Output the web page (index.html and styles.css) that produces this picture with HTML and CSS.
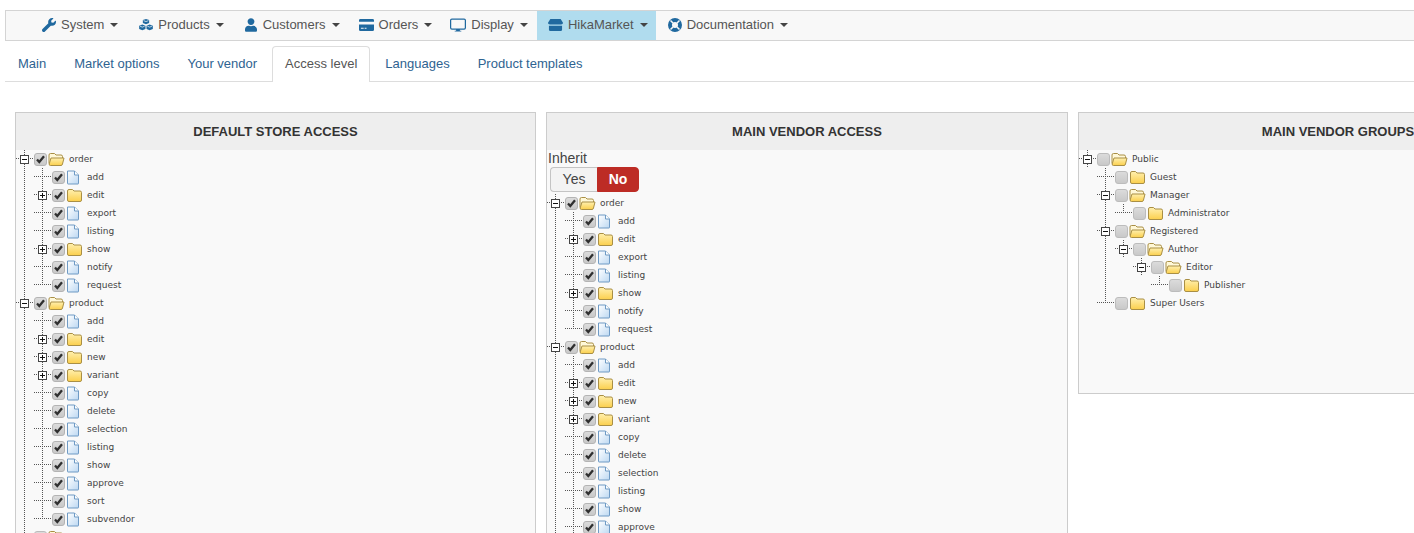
FILE: index.html
```html
<!DOCTYPE html>
<html lang="en">
<head>
<meta charset="utf-8">
<title>HikaMarket - Access level</title>
<link rel="stylesheet" href="styles.css">
</head>
<body>
<svg class="defs" width="0" height="0" aria-hidden="true">
  <defs>
    <linearGradient id="fy" x1="0" y1="0" x2="0" y2="1"><stop offset="0" stop-color="#fff0b0"/><stop offset="1" stop-color="#fbcf4c"/></linearGradient>
    <linearGradient id="fb" x1="0" y1="0" x2="1" y2="1"><stop offset="0" stop-color="#ffffff"/><stop offset="1" stop-color="#bcd8f2"/></linearGradient>
    <linearGradient id="cg" x1="0" y1="0" x2="0" y2="1"><stop offset="0" stop-color="#dcdcdc"/><stop offset="1" stop-color="#c8c8c8"/></linearGradient>
    <symbol id="check" viewBox="0 0 13 13">
      <rect x=".5" y=".5" width="12" height="12" rx="2.500" fill="url(#cg)" stroke="#b4b4b4"/>
      <path d="M3 6.500l2.300 2.500L10 3.200" fill="none" stroke="#2f2f2f" stroke-width="2.300"/>
    </symbol>
    <symbol id="uncheck" viewBox="0 0 13 13">
      <rect x=".5" y=".5" width="12" height="12" rx="2.500" fill="url(#cg)" stroke="#bcbcbc"/>
    </symbol>
    <symbol id="fopen" viewBox="0 0 17 14">
      <path d="M1 11.500V3Q1 1.500 2.500 1.500H6.500L8 3H13Q14.500 3 14.500 4.500V6" fill="#fff8d8" stroke="#a98f45"/>
      <path d="M1.200 12L3 6H16L14.500 12Q14.200 13.500 13 13.500H2.500Q1 13.500 1.200 12z" fill="url(#fy)" stroke="#a98f45"/>
    </symbol>
    <symbol id="fclosed" viewBox="0 0 17 14">
      <path d="M1.500 12V3Q1.500 1.500 3 1.500H6.500L8 3H14Q15.500 3 15.500 4.500V12Q15.500 13.500 14 13.500H3Q1.500 13.500 1.500 12z" fill="url(#fy)" stroke="#a98f45"/>
    </symbol>
    <symbol id="file" viewBox="0 0 14 15">
      <path d="M1.500 1H8.500L12.500 5V13.500Q12.500 14 12 14H2Q1.500 14 1.500 13.500z" fill="url(#fb)" stroke="#6f9ac4"/>
      <path d="M8.500 1V5H12.500" fill="#fff" stroke="#6f9ac4"/>
    </symbol>
    <symbol id="minus" viewBox="0 0 9 9">
      <rect x=".5" y=".5" width="8" height="8" fill="#fff" stroke="#444"/>
      <path d="M2 4.500H7" stroke="#111"/>
    </symbol>
    <symbol id="plus" viewBox="0 0 9 9">
      <rect x=".5" y=".5" width="8" height="8" fill="#fff" stroke="#444"/>
      <path d="M2 4.500H7M4.500 2V7" stroke="#111"/>
    </symbol>
  </defs>
</svg>

<nav class="menu">
  <a class="menu-item" href="#"><svg class="mi" viewBox="0 0 512 512"><path d="M507.73 109.1c-2.24-9.03-13.54-12.09-20.12-5.51l-74.36 74.36-67.88-11.31-11.31-67.88 74.36-74.36c6.62-6.62 3.43-17.9-5.66-20.16-47.38-11.74-99.55.91-136.58 37.93-39.64 39.64-50.55 97.1-34.05 147.2L18.74 402.76c-24.99 24.99-24.99 65.51 0 90.5 24.99 24.99 65.51 24.99 90.5 0l213.21-213.21c50.12 16.71 107.47 5.68 147.37-34.22 37.07-37.07 49.7-89.32 37.91-136.73z"/></svg><span>System</span><i class="caret"></i></a>
  <a class="menu-item" href="#"><svg class="mi" viewBox="0 0 16 14"><path d="M8 0l3.600 1.400v3.300L8 6.100 4.400 4.700V1.400zM3.800 6.500l3.600 1.400v3.700L3.800 13 .2 11.600V7.900zM12.200 6.500l3.600 1.400v3.700L12.200 13l-3.600-1.400V7.900z"/><path d="M5.200 2l2.800 1.100L10.800 2M1.200 8.400l2.600 1 2.600-1M9.600 8.400l2.600 1 2.600-1" fill="none" stroke="#fff" stroke-width=".8"/></svg><span>Products</span><i class="caret"></i></a>
  <a class="menu-item" href="#"><svg class="mi mi-user" viewBox="0 0 448 512"><path d="M224 256c70.700 0 128-57.300 128-128S294.700 0 224 0 96 57.300 96 128s57.300 128 128 128zm89.600 32h-16.700c-22.200 10.200-46.900 16-72.900 16s-50.600-5.800-72.900-16h-16.700C60.200 288 0 348.200 0 422.400V464c0 26.500 21.500 48 48 48h352c26.500 0 48-21.500 48-48v-41.600c0-74.200-60.200-134.400-134.400-134.400z"/></svg><span>Customers</span><i class="caret"></i></a>
  <a class="menu-item" href="#"><svg class="mi mi-wide" viewBox="0 0 16 13"><path d="M1.500 0h13A1.500 1.500 0 0 1 16 1.500V3H0V1.500A1.500 1.500 0 0 1 1.500 0zM0 6h16v5.500a1.500 1.500 0 0 1-1.500 1.500h-13A1.500 1.500 0 0 1 0 11.500zm2 3.500v1h3v-1zm4 0v1h2v-1z"/></svg><span>Orders</span><i class="caret"></i></a>
  <a class="menu-item" href="#"><svg class="mi mi-wider" viewBox="0 0 17 14"><path d="M2 0h13a2 2 0 0 1 2 2v8a2 2 0 0 1-2 2h-4.500v1H12v1H5v-1h1.500v-1H2a2 2 0 0 1-2-2V2a2 2 0 0 1 2-2zm0 1.300a.7.7 0 0 0-.7.7v8c0 .4.300.7.7.7h13c.4 0 .7-.3.7-.7V2a.7.7 0 0 0-.7-.7z"/></svg><span>Display</span><i class="caret"></i></a>
  <a class="menu-item is-active" href="#"><svg class="mi mi-wide" viewBox="0 0 16 13"><path d="M2.500 0h11L16 4.200C16 5.500 15 6 14 6H2C1 6 0 5.500 0 4.200zM1 7.200h14V11.500A1.500 1.500 0 0 1 13.500 13h-11A1.500 1.500 0 0 1 1 11.500z"/></svg><span>HikaMarket</span><i class="caret"></i></a>
  <a class="menu-item" href="#"><svg class="mi" viewBox="0 0 14 14"><circle cx="7" cy="7" r="5" fill="none" stroke="currentColor" stroke-width="4"/><path d="M2.500 2.500l2.500 2.500M11.500 2.500L9 5M2.500 11.500L5 9M11.500 11.500L9 9" stroke="#f8f8f8" stroke-width="1.500"/></svg><span>Documentation</span><i class="caret"></i></a>
</nav>

<ul class="tabs">
  <li><a href="#">Main</a></li>
  <li><a href="#">Market options</a></li>
  <li><a href="#">Your vendor</a></li>
  <li class="on"><a href="#">Access level</a></li>
  <li><a href="#">Languages</a></li>
  <li><a href="#">Product templates</a></li>
</ul>

<main class="panels">
  <section class="panel">
    <h3 class="panel-title">DEFAULT STORE ACCESS</h3>
    <div class="panel-body">
      <div class="row"><b class="c m"><svg><use href="#minus"/></svg></b><svg class="cb"><use href="#check"/></svg><svg class="fo"><use href="#fopen"/></svg><span>order</span></div>
      <div class="row"><b class="c v"></b><b class="c j"></b><svg class="cb"><use href="#check"/></svg><svg class="fi"><use href="#file"/></svg><span>add</span></div>
      <div class="row"><b class="c v"></b><b class="c m"><svg><use href="#plus"/></svg></b><svg class="cb"><use href="#check"/></svg><svg class="fo"><use href="#fclosed"/></svg><span>edit</span></div>
      <div class="row"><b class="c v"></b><b class="c j"></b><svg class="cb"><use href="#check"/></svg><svg class="fi"><use href="#file"/></svg><span>export</span></div>
      <div class="row"><b class="c v"></b><b class="c j"></b><svg class="cb"><use href="#check"/></svg><svg class="fi"><use href="#file"/></svg><span>listing</span></div>
      <div class="row"><b class="c v"></b><b class="c m"><svg><use href="#plus"/></svg></b><svg class="cb"><use href="#check"/></svg><svg class="fo"><use href="#fclosed"/></svg><span>show</span></div>
      <div class="row"><b class="c v"></b><b class="c j"></b><svg class="cb"><use href="#check"/></svg><svg class="fi"><use href="#file"/></svg><span>notify</span></div>
      <div class="row"><b class="c v"></b><b class="c l"></b><svg class="cb"><use href="#check"/></svg><svg class="fi"><use href="#file"/></svg><span>request</span></div>
      <div class="row"><b class="c m"><svg><use href="#minus"/></svg></b><svg class="cb"><use href="#check"/></svg><svg class="fo"><use href="#fopen"/></svg><span>product</span></div>
      <div class="row"><b class="c v"></b><b class="c j"></b><svg class="cb"><use href="#check"/></svg><svg class="fi"><use href="#file"/></svg><span>add</span></div>
      <div class="row"><b class="c v"></b><b class="c m"><svg><use href="#plus"/></svg></b><svg class="cb"><use href="#check"/></svg><svg class="fo"><use href="#fclosed"/></svg><span>edit</span></div>
      <div class="row"><b class="c v"></b><b class="c m"><svg><use href="#plus"/></svg></b><svg class="cb"><use href="#check"/></svg><svg class="fo"><use href="#fclosed"/></svg><span>new</span></div>
      <div class="row"><b class="c v"></b><b class="c m"><svg><use href="#plus"/></svg></b><svg class="cb"><use href="#check"/></svg><svg class="fo"><use href="#fclosed"/></svg><span>variant</span></div>
      <div class="row"><b class="c v"></b><b class="c j"></b><svg class="cb"><use href="#check"/></svg><svg class="fi"><use href="#file"/></svg><span>copy</span></div>
      <div class="row"><b class="c v"></b><b class="c j"></b><svg class="cb"><use href="#check"/></svg><svg class="fi"><use href="#file"/></svg><span>delete</span></div>
      <div class="row"><b class="c v"></b><b class="c j"></b><svg class="cb"><use href="#check"/></svg><svg class="fi"><use href="#file"/></svg><span>selection</span></div>
      <div class="row"><b class="c v"></b><b class="c j"></b><svg class="cb"><use href="#check"/></svg><svg class="fi"><use href="#file"/></svg><span>listing</span></div>
      <div class="row"><b class="c v"></b><b class="c j"></b><svg class="cb"><use href="#check"/></svg><svg class="fi"><use href="#file"/></svg><span>show</span></div>
      <div class="row"><b class="c v"></b><b class="c j"></b><svg class="cb"><use href="#check"/></svg><svg class="fi"><use href="#file"/></svg><span>approve</span></div>
      <div class="row"><b class="c v"></b><b class="c j"></b><svg class="cb"><use href="#check"/></svg><svg class="fi"><use href="#file"/></svg><span>sort</span></div>
      <div class="row"><b class="c v"></b><b class="c l"></b><svg class="cb"><use href="#check"/></svg><svg class="fi"><use href="#file"/></svg><span>subvendor</span></div>
      <div class="row"><b class="c m"><svg><use href="#minus"/></svg></b><svg class="cb"><use href="#uncheck"/></svg><svg class="fo"><use href="#fopen"/></svg><span>vendor</span></div>
    </div>
  </section>

  <section class="panel panel-mid">
    <h3 class="panel-title">MAIN VENDOR ACCESS</h3>
    <div class="panel-body">
      <div class="inherit">Inherit</div>
      <div class="toggle"><span class="yes">Yes</span><span class="no">No</span></div>
      <div class="row"><b class="c m"><svg><use href="#minus"/></svg></b><svg class="cb"><use href="#check"/></svg><svg class="fo"><use href="#fopen"/></svg><span>order</span></div>
      <div class="row"><b class="c v"></b><b class="c j"></b><svg class="cb"><use href="#check"/></svg><svg class="fi"><use href="#file"/></svg><span>add</span></div>
      <div class="row"><b class="c v"></b><b class="c m"><svg><use href="#plus"/></svg></b><svg class="cb"><use href="#check"/></svg><svg class="fo"><use href="#fclosed"/></svg><span>edit</span></div>
      <div class="row"><b class="c v"></b><b class="c j"></b><svg class="cb"><use href="#check"/></svg><svg class="fi"><use href="#file"/></svg><span>export</span></div>
      <div class="row"><b class="c v"></b><b class="c j"></b><svg class="cb"><use href="#check"/></svg><svg class="fi"><use href="#file"/></svg><span>listing</span></div>
      <div class="row"><b class="c v"></b><b class="c m"><svg><use href="#plus"/></svg></b><svg class="cb"><use href="#check"/></svg><svg class="fo"><use href="#fclosed"/></svg><span>show</span></div>
      <div class="row"><b class="c v"></b><b class="c j"></b><svg class="cb"><use href="#check"/></svg><svg class="fi"><use href="#file"/></svg><span>notify</span></div>
      <div class="row"><b class="c v"></b><b class="c l"></b><svg class="cb"><use href="#check"/></svg><svg class="fi"><use href="#file"/></svg><span>request</span></div>
      <div class="row"><b class="c m"><svg><use href="#minus"/></svg></b><svg class="cb"><use href="#check"/></svg><svg class="fo"><use href="#fopen"/></svg><span>product</span></div>
      <div class="row"><b class="c v"></b><b class="c j"></b><svg class="cb"><use href="#check"/></svg><svg class="fi"><use href="#file"/></svg><span>add</span></div>
      <div class="row"><b class="c v"></b><b class="c m"><svg><use href="#plus"/></svg></b><svg class="cb"><use href="#check"/></svg><svg class="fo"><use href="#fclosed"/></svg><span>edit</span></div>
      <div class="row"><b class="c v"></b><b class="c m"><svg><use href="#plus"/></svg></b><svg class="cb"><use href="#check"/></svg><svg class="fo"><use href="#fclosed"/></svg><span>new</span></div>
      <div class="row"><b class="c v"></b><b class="c m"><svg><use href="#plus"/></svg></b><svg class="cb"><use href="#check"/></svg><svg class="fo"><use href="#fclosed"/></svg><span>variant</span></div>
      <div class="row"><b class="c v"></b><b class="c j"></b><svg class="cb"><use href="#check"/></svg><svg class="fi"><use href="#file"/></svg><span>copy</span></div>
      <div class="row"><b class="c v"></b><b class="c j"></b><svg class="cb"><use href="#check"/></svg><svg class="fi"><use href="#file"/></svg><span>delete</span></div>
      <div class="row"><b class="c v"></b><b class="c j"></b><svg class="cb"><use href="#check"/></svg><svg class="fi"><use href="#file"/></svg><span>selection</span></div>
      <div class="row"><b class="c v"></b><b class="c j"></b><svg class="cb"><use href="#check"/></svg><svg class="fi"><use href="#file"/></svg><span>listing</span></div>
      <div class="row"><b class="c v"></b><b class="c j"></b><svg class="cb"><use href="#check"/></svg><svg class="fi"><use href="#file"/></svg><span>show</span></div>
      <div class="row"><b class="c v"></b><b class="c j"></b><svg class="cb"><use href="#check"/></svg><svg class="fi"><use href="#file"/></svg><span>approve</span></div>
    </div>
  </section>

  <section class="panel panel-short">
    <h3 class="panel-title">MAIN VENDOR GROUPS</h3>
    <div class="panel-body">
      <div class="row"><b class="c m"><svg><use href="#minus"/></svg></b><svg class="cb"><use href="#uncheck"/></svg><svg class="fo"><use href="#fopen"/></svg><span>Public</span></div>
      <div class="row"><b class="c"></b><b class="c j"></b><svg class="cb"><use href="#uncheck"/></svg><svg class="fo"><use href="#fclosed"/></svg><span>Guest</span></div>
      <div class="row"><b class="c"></b><b class="c m"><svg><use href="#minus"/></svg></b><svg class="cb"><use href="#uncheck"/></svg><svg class="fo"><use href="#fopen"/></svg><span>Manager</span></div>
      <div class="row"><b class="c"></b><b class="c v"></b><b class="c l"></b><svg class="cb"><use href="#uncheck"/></svg><svg class="fo"><use href="#fclosed"/></svg><span>Administrator</span></div>
      <div class="row"><b class="c"></b><b class="c m"><svg><use href="#minus"/></svg></b><svg class="cb"><use href="#uncheck"/></svg><svg class="fo"><use href="#fopen"/></svg><span>Registered</span></div>
      <div class="row"><b class="c"></b><b class="c v"></b><b class="c m"><svg><use href="#minus"/></svg></b><svg class="cb"><use href="#uncheck"/></svg><svg class="fo"><use href="#fopen"/></svg><span>Author</span></div>
      <div class="row"><b class="c"></b><b class="c v"></b><b class="c"></b><b class="c m"><svg><use href="#minus"/></svg></b><svg class="cb"><use href="#uncheck"/></svg><svg class="fo"><use href="#fopen"/></svg><span>Editor</span></div>
      <div class="row"><b class="c"></b><b class="c v"></b><b class="c"></b><b class="c"></b><b class="c l"></b><svg class="cb"><use href="#uncheck"/></svg><svg class="fo"><use href="#fclosed"/></svg><span>Publisher</span></div>
      <div class="row"><b class="c"></b><b class="c l"></b><svg class="cb"><use href="#uncheck"/></svg><svg class="fo"><use href="#fclosed"/></svg><span>Super Users</span></div>
    </div>
  </section>
</main>
</body>
</html>
```
FILE: styles.css
```css
html, body { margin: 0; height: 533px; overflow: hidden; background: #fff; }
body { font: 13px/18px "Liberation Sans", Arial, sans-serif; color: #555; }
a { text-decoration: none; color: inherit; }
.defs { display: block; height: 0; }

.menu { display: flex; height: 29px; margin: 10px 0 0 5px; padding-left: 26px; background: #f8f8f8; border: 1px solid #d4d4d4; border-right: 0; }
.menu-item { display: flex; align-items: center; padding: 0 9px 2px 10px; margin-right: 1px; box-sizing: border-box; height: 29px; }
.menu-item span { margin-left: 5px; }
.menu-item:nth-child(1) { margin-right: 2px; }
.menu-item:nth-child(3) { margin-right: 0; }
.menu-item:nth-child(4) { margin-right: -1px; }
.menu-item:nth-child(5) { margin-right: 0; }
.menu-item.is-active { background: #b0dcee; margin-right: 2px; padding-left: 11px; padding-right: 8px; }
.mi { width: 14px; height: 14px; fill: #20699f; color: #20699f; flex: none; }
.mi-user { width: 12px; margin: 0 1px; }
.mi-wide { width: 15px; }
.mi-wider { width: 16px; }
.caret { width: 0; height: 0; margin-left: 6px; border: 4px solid transparent; border-top-color: #444; border-bottom: 0; }

.tabs { display: flex; list-style: none; margin: 5px 0 0 5px; padding: 0; height: 35px; border-bottom: 1px solid #ddd; }
.tabs li { margin-right: 2px; height: 35px; }
.tabs a { display: block; height: 34px; line-height: 34px; padding: 0 12px; border: 1px solid transparent; border-bottom: 0; color: #2f6391; border-radius: 4px 4px 0 0; }
.tabs .on a { color: #555; background: #fff; height: 35px; border-color: #ddd; }

.panels { display: flex; gap: 10px; margin: 30px 0 0 15px; align-items: flex-start; }
.panel { flex: 0 0 521px; box-sizing: border-box; border: 1px solid #ccc; background: #f9f9f9; }
.panel-mid { flex-basis: 522px; }
.panel-short { flex-basis: 520px; height: 282px; }
.panel-title { margin: 0; height: 37px; line-height: 37px; text-align: center; background: #eee; color: #333; font-size: 13px; font-weight: bold; }
.panel-body { overflow: hidden; }

.row { display: flex; align-items: center; height: 18px; font: 9px/18px "DejaVu Sans", Verdana, sans-serif; color: #444; white-space: nowrap; }
.c { flex: none; display: flex; align-items: center; justify-content: center; width: 18px; height: 18px; background-repeat: no-repeat; }
.c svg { width: 9px; height: 9px; margin-left: -1px; }
.v { background-image: linear-gradient(#555 50%, transparent 50%); background-size: 1px 2px; background-position: 8px 0; background-repeat: repeat-y; }
.j, .m { background-image: linear-gradient(#555 50%, transparent 50%), linear-gradient(90deg, #555 50%, transparent 50%); background-size: 1px 2px, 2px 1px; background-position: 8px 0, 8px 8px; background-repeat: repeat-y, repeat-x; }
.l { background-image: linear-gradient(#555 50%, transparent 50%), linear-gradient(90deg, #555 50%, transparent 50%); background-size: 1px 2px, 2px 1px; background-position: 8px 0, 8px 8px; background-repeat: repeat-y, repeat-x; clip-path: inset(0 0 9px 0); }
.cb { width: 13px; height: 13px; flex: none; margin-top: 1px; }
.fo { width: 17px; height: 14px; flex: none; margin-left: 1px; margin-right: 4px; }
.fi { width: 14px; height: 15px; flex: none; margin-left: 1px; margin-right: 7px; }

.inherit { height: 17px; line-height: 17px; padding-left: 1px; font-size: 14px; color: #444; }
.toggle { display: flex; width: 89px; height: 25px; margin: 0 0 2px 3px; line-height: 23px; font-size: 14px; text-align: center; }
.toggle span { box-sizing: border-box; flex: none; }
.yes { width: 47px; background: #f3f3f3; border: 1px solid #c4c4c4; border-right: 0; border-radius: 4px 0 0 4px; color: #444; }
.no { width: 42px; background: #bd2c25; border: 1px solid #bd2c25; border-radius: 0 4px 4px 0; color: #fff; font-weight: bold; }
```
